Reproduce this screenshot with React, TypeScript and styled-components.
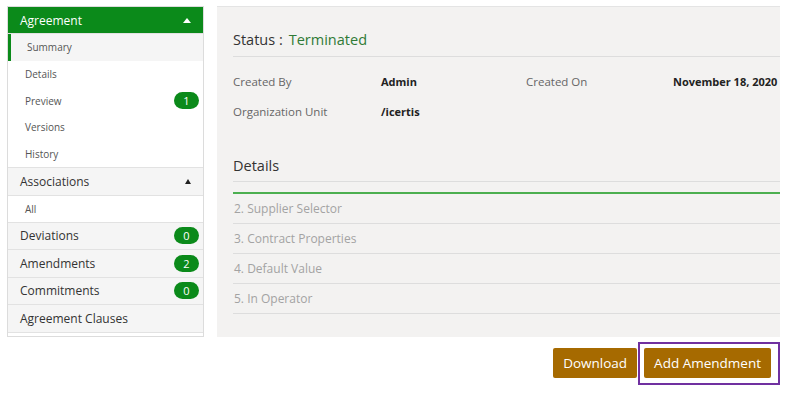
import React from 'react';
import styled, { createGlobalStyle } from 'styled-components';

const GlobalStyle = createGlobalStyle`
  body {
    margin: 0;
    background: #ffffff;
    font-family: "Open Sans", "Liberation Sans", sans-serif;
  }
`;

const Page = styled.div`
  width: 785px;
  height: 393px;
  box-sizing: border-box;
  padding: 6px 5px 0 7px;
`;

const Top = styled.div`
  display: flex;
  gap: 13px;
  height: 331px;
`;

const Sidebar = styled.div`
  width: 197px;
  box-sizing: border-box;
  border: 1px solid #dcdcdc;
  background: #ffffff;
  display: flex;
  flex-direction: column;
`;

const GroupHeader = styled.div<{ $active?: boolean }>`
  height: ${p => (p.$active ? 27 : 27.5)}px;
  flex: none;
  display: flex;
  align-items: center;
  justify-content: space-between;
  padding: 0 8px 0 12px;
  font-size: 12px;
  background: ${p => (p.$active ? '#0b8a1a' : '#f5f5f5')};
  color: ${p => (p.$active ? '#ffffff' : '#333333')};
  border-bottom: 1px solid #e2e2e2;
  box-sizing: border-box;
  white-space: nowrap;
`;

const Caret = styled.span<{ $light?: boolean }>`
  width: 0;
  height: 0;
  border-left: ${p => (p.$light ? 4 : 3)}px solid transparent;
  border-right: ${p => (p.$light ? 4 : 3)}px solid transparent;
  border-bottom: 5px solid ${p => (p.$light ? '#ffffff' : '#222222')};
  margin-right: 4px;
`;

const SubItem = styled.div<{ $selected?: boolean; $last?: boolean }>`
  height: 26.7px;
  flex: none;
  display: flex;
  align-items: center;
  justify-content: space-between;
  box-sizing: border-box;
  padding: 0 4px 0 ${p => (p.$selected ? 16 : 17)}px;
  font-size: 10px;
  color: #555555;
  background: ${p => (p.$selected ? '#f5f5f5' : '#ffffff')};
  border-left: ${p => (p.$selected ? '3px solid #0b8a1a' : 'none')};
  border-bottom: ${p => (p.$last ? '1px solid #e2e2e2' : 'none')};
`;

const SubGroup = styled.div`
  border-bottom: 1px solid #e2e2e2;
  display: flex;
  flex-direction: column;
`;

const Badge = styled.span`
  min-width: 25px;
  height: 17px;
  border-radius: 9px;
  background: #0b8a1a;
  color: #ffffff;
  font-size: 11px;
  display: inline-flex;
  align-items: center;
  justify-content: center;
`;

const Main = styled.div`
  flex: 1;
  background: #f3f2f1;
  border-top: 1px solid #e4e4e4;
  box-sizing: border-box;
  padding: 0 0 0 16px;
  display: flex;
  flex-direction: column;
`;

const StatusTitle = styled.div`
  height: 50px;
  display: flex;
  align-items: flex-end;
  padding-bottom: 7px;
  box-sizing: border-box;
  font-size: 14.5px;
  color: #333333;
  border-bottom: 1px solid #dddddd;
`;

const StatusValue = styled.span`
  color: #2f7a36;
  margin-left: 6px;
`;

const InfoGrid = styled.div`
  display: grid;
  grid-template-columns: 148px 145px 147px 1fr;
  grid-auto-rows: 30px;
  padding-top: 9px;
  align-items: center;
`;

const Label = styled.span`
  font-size: 11.5px;
  color: #666666;
`;

const Value = styled.span`
  font-size: 11px;
  font-weight: 700;
  color: #222222;
  white-space: nowrap;
`;

const SectionTitle = styled.div`
  margin-top: 24px;
  height: 32px;
  font-size: 14.5px;
  color: #333333;
  border-bottom: 1px solid #dddddd;
  display: flex;
  align-items: center;
  box-sizing: border-box;
  padding-bottom: 1px;
`;

const Progress = styled.div`
  margin-top: 10px;
  height: 2px;
  background: #4caf50;
`;

const Step = styled.div`
  height: 30px;
  display: flex;
  align-items: center;
  font-size: 12px;
  color: #a3a3a3;
  border-bottom: 1px solid #dddddd;
  box-sizing: border-box;
  padding-left: 1px;
`;

const Actions = styled.div`
  display: flex;
  justify-content: flex-end;
  align-items: flex-start;
  padding-top: 5px;
  gap: 1px;
`;

const Button = styled.button`
  height: 30px;
  border: none;
  border-radius: 2px;
  background: #a66a00;
  color: #ffffff;
  font-family: "Open Sans", "Liberation Sans", sans-serif;
  font-size: 13.5px;
  padding: 0 10px;
  cursor: pointer;
  white-space: nowrap;
`;

const Highlight = styled.div`
  border: 2px solid #7030a0;
  padding: 4px 7px 5px 4px;
  display: flex;
`;

const DownloadButton = styled(Button)`
  margin-top: 6px;
`;

const subItems = [
  { label: 'Summary', selected: true },
  { label: 'Details' },
  { label: 'Preview', count: 1 },
  { label: 'Versions' },
  { label: 'History' },
];

const groups = [
  { label: 'Deviations', count: 0 },
  { label: 'Amendments', count: 2 },
  { label: 'Commitments', count: 0 },
  { label: 'Agreement Clauses' },
];

const steps = ['2. Supplier Selector', '3. Contract Properties', '4. Default Value', '5. In Operator'];

export default function App() {
  return (
    <Page>
      <GlobalStyle />
      <Top>
        <Sidebar>
          <GroupHeader $active>
            Agreement
            <Caret $light />
          </GroupHeader>
          <SubGroup>
            {subItems.map(item => (
              <SubItem key={item.label} $selected={item.selected}>
                {item.label}
                {item.count !== undefined && <Badge>{item.count}</Badge>}
              </SubItem>
            ))}
          </SubGroup>
          <GroupHeader>
            Associations
            <Caret />
          </GroupHeader>
          <SubItem $last>All</SubItem>
          {groups.map(g => (
            <GroupHeader key={g.label} style={{ paddingRight: 4 }}>
              {g.label}
              {g.count !== undefined && <Badge>{g.count}</Badge>}
            </GroupHeader>
          ))}
        </Sidebar>
        <Main>
          <StatusTitle>
            Status :<StatusValue>Terminated</StatusValue>
          </StatusTitle>
          <InfoGrid>
            <Label>Created By</Label>
            <Value>Admin</Value>
            <Label>Created On</Label>
            <Value>November 18, 2020</Value>
            <Label>Organization Unit</Label>
            <Value>/icertis</Value>
          </InfoGrid>
          <SectionTitle>Details</SectionTitle>
          <Progress />
          {steps.map(s => (
            <Step key={s}>{s}</Step>
          ))}
        </Main>
      </Top>
      <Actions>
        <DownloadButton>Download</DownloadButton>
        <Highlight>
          <Button>Add Amendment</Button>
        </Highlight>
      </Actions>
    </Page>
  );
}
